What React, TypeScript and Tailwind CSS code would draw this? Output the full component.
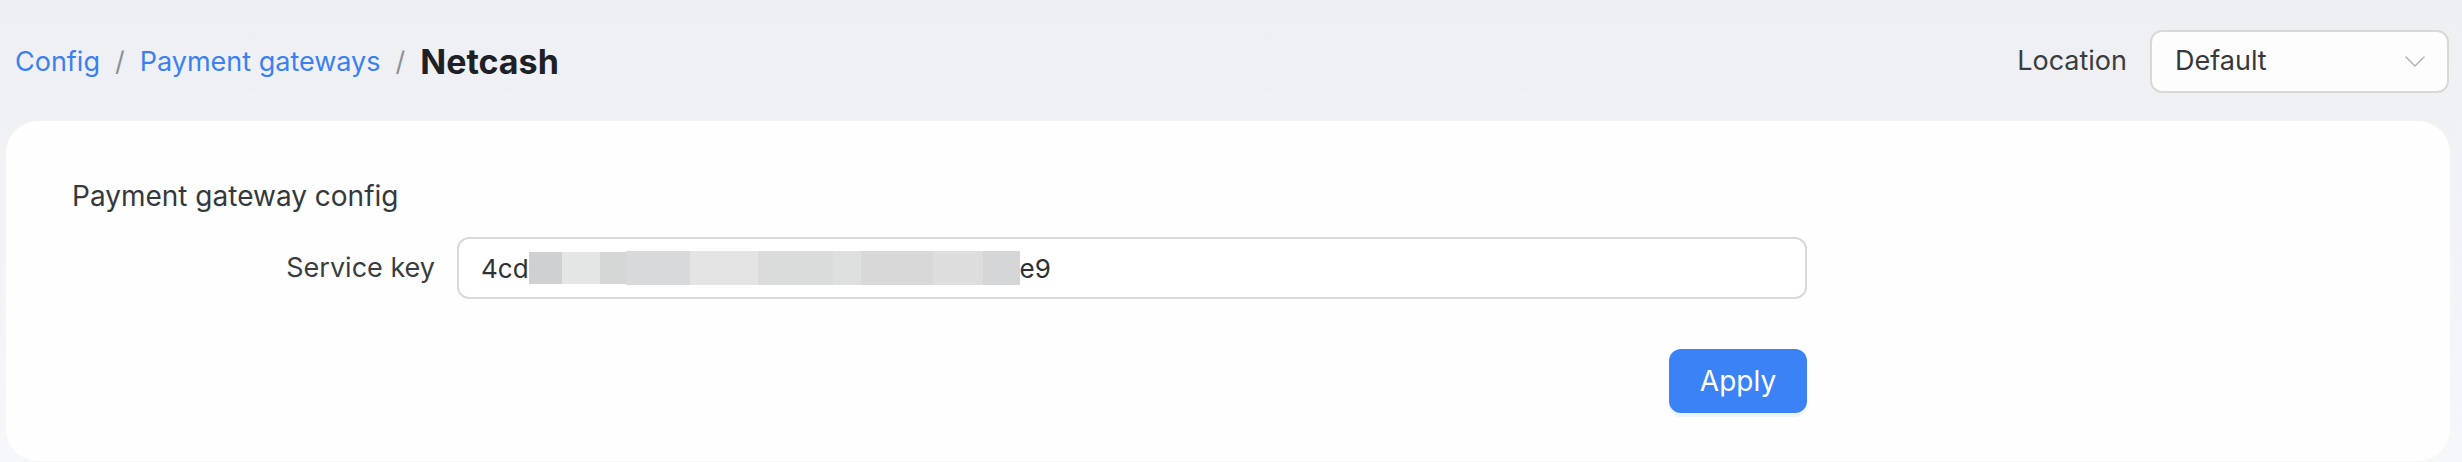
import React from "react";

const blocks: { w: number; c: string; tall?: boolean }[] = [
  { w: 33, c: "#cfd0d2" },
  { w: 38, c: "#e4e5e5" },
  { w: 26, c: "#d5d6d6" },
  { w: 64, c: "#d8d9da", tall: true },
  { w: 68, c: "#e4e4e4", tall: true },
  { w: 75, c: "#dadbdb", tall: true },
  { w: 28, c: "#dedfdf", tall: true },
  { w: 72, c: "#d8d8d8", tall: true },
  { w: 50, c: "#dddddd", tall: true },
  { w: 37, c: "#d5d6d8", tall: true },
];

export default function App() {
  return (
    <div
      className="w-[2462px] h-[462px] overflow-hidden bg-gradient-to-b from-[#eeeff3] to-[#f6f7fb] text-[#35393c]"
      style={{ fontFamily: "Inter, 'Noto Sans', sans-serif" }}
    >
      {/* Header */}
      <div className="h-[121px] flex items-center justify-between pl-[15px] pr-[13px] pt-[2px]">
        <div className="flex items-center text-[27px] leading-none">
          <span className="text-[#3a80f2]">Config</span>
          <span className="text-[#8e9093] mx-[15px]">/</span>
          <span className="text-[#3a80f2]">Payment gateways</span>
          <span className="text-[#8e9093] mx-[15px]">/</span>
          <span className="text-[34px] font-bold text-[#1d2125]">Netcash</span>
        </div>
        <div className="flex items-center gap-[23px]">
          <span className="text-[27px] text-[#3a3d40]">Location</span>
          <div className="w-[299px] h-[63px] rounded-[12px] border-2 border-[#d8d8d8] bg-[#fdfdfd] flex items-center justify-between pl-[23px] pr-[22px]">
            <span className="text-[27px] text-[#35393c]">Default</span>
            <svg width="20" height="11" viewBox="0 0 20 11" fill="none">
              <path d="M1 1l9 9 9-9" stroke="#b3b5b8" strokeWidth="1.5" strokeLinecap="round" strokeLinejoin="round" />
            </svg>
          </div>
        </div>
      </div>

      {/* Card */}
      <div className="ml-[6px] mr-[12px] h-[340px] rounded-[32px] bg-[#fefefe] pt-[55px] pl-[66px]">
        <div className="w-[1735px]">
          <div className="text-[28px] leading-[40px] text-[#35393c]">Payment gateway config</div>
          <div className="mt-[21px] flex items-center">
            <div className="w-[363px] text-right text-[27px] text-[#3a3e41]">Service key</div>
            <div className="ml-[22px] w-[1350px] h-[62px] rounded-[12px] border-2 border-[#d9d9d9] bg-white flex items-center pl-[22px] text-[26px] text-[#2d3134]">
              <span>4cd</span>
              <span className="flex items-start h-[34px]">
                {blocks.map((b, i) => (
                  <span
                    key={i}
                    className={b.tall ? "block h-[34px]" : "block h-[32px] mt-[1px]"}
                    style={{ width: b.w, backgroundColor: b.c }}
                  />
                ))}
              </span>
              <span>e9</span>
            </div>
          </div>
          <div className="mt-[50px] flex justify-end">
            <button className="w-[138px] h-[64px] rounded-[12px] bg-[#3a82f5] text-white text-[28px] shadow-[0_4px_0_#edf4fe]">
              Apply
            </button>
          </div>
        </div>
      </div>
    </div>
  );
}
